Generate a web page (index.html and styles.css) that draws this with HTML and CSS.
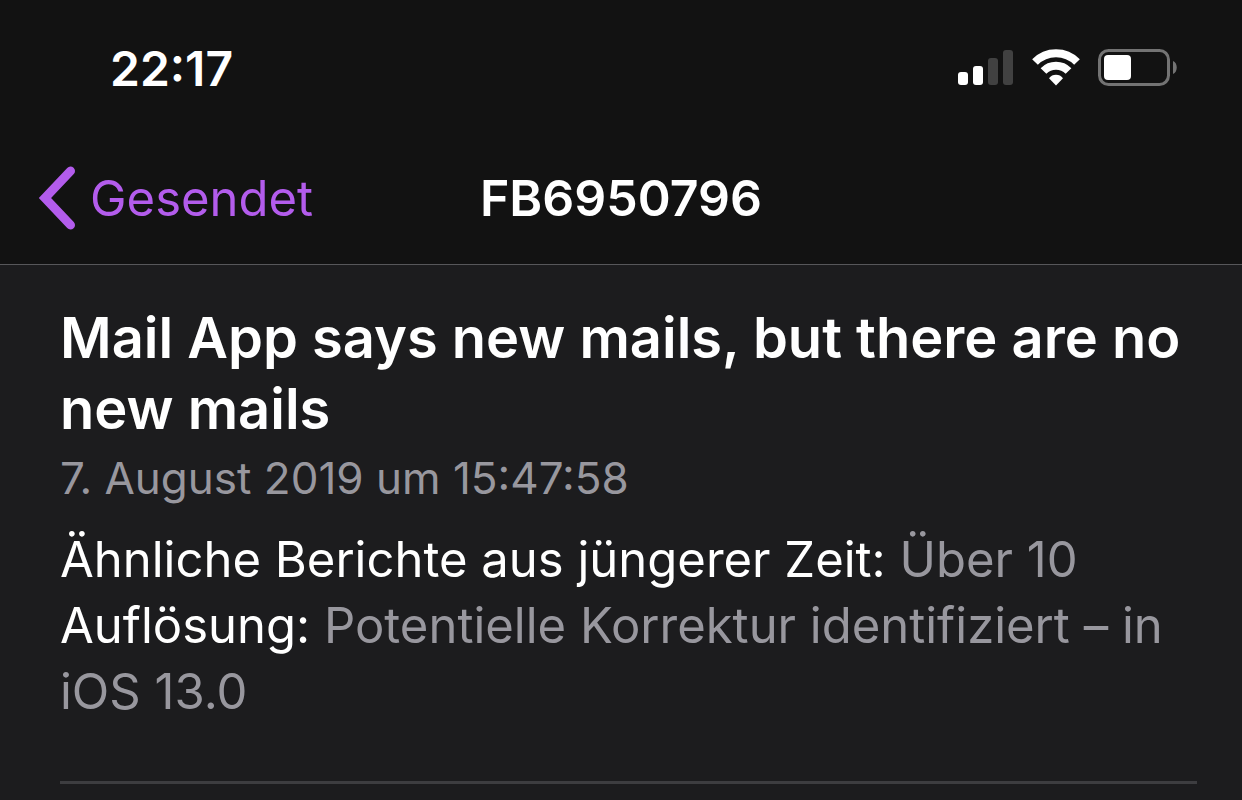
FILE: index.html
```
<!DOCTYPE html>
<html lang="de">
<head>
    <meta charset="UTF-8">
    <meta name="viewport" content="width=device-width, initial-scale=1.0">
    <title>FB6950796</title>
    <link rel="stylesheet" href="styles.css">
</head>
<body>
    <header class="top">
        <div class="status-bar">
            <time class="clock">22:17</time>
            <div class="status-icons">
                <svg class="signal" viewBox="0 0 56 36" aria-hidden="true">
                    <rect x="0" y="22" width="10" height="13" rx="3"/>
                    <rect x="15" y="16" width="10" height="19" rx="3"/>
                    <rect class="dim" x="30" y="8" width="10" height="27" rx="3"/>
                    <rect class="dim" x="45" y="0" width="10" height="35" rx="3"/>
                </svg>
                <svg class="wifi" viewBox="0 0 48 38" aria-hidden="true">
                    <path class="arc" d="M3 13a29.500 29.500 0 0 1 42 0"/>
                    <path class="arc" d="M11.500 22a17.500 17.500 0 0 1 25 0"/>
                    <path d="M24 36.500L17 29.200a9 9 0 0 1 14 0z"/>
                </svg>
                <svg class="battery" viewBox="0 0 80 38" aria-hidden="true">
                    <rect class="shell" x="1.500" y="1.500" width="69" height="34" rx="9"/>
                    <rect x="6" y="6" width="27" height="25" rx="4"/>
                    <path class="cap" d="M75 12c5 2 5 11 0 13z"/>
                </svg>
            </div>
        </div>
        <nav class="nav-bar">
            <a class="back" href="#">
                <svg class="chevron" viewBox="0 0 38 64" aria-hidden="true"><path d="M32.500 5L7 32l25.500 27"/></svg>
                Gesendet
            </a>
            <h1 class="title">FB6950796</h1>
        </nav>
    </header>

    <main class="report">
        <h2 class="subject">Mail App says new mails, but there are no new mails</h2>
        <time class="date">7. August 2019 um 15:47:58</time>
        <p class="details">
            Ähnliche Berichte aus jüngerer Zeit: <span class="value">Über 10</span><br>
            Auflösung: <span class="value">Potentielle Korrektur identifiziert – in iOS 13.0</span>
        </p>
        <hr class="divider">
    </main>
</body>
</html>
```
FILE: styles.css
```
body {
    margin: 0;
    background-color: #1c1c1e;
    color: #fff;
    font-family: Inter, "Liberation Sans", sans-serif;
}

.top {
    background-color: #121212;
    border-bottom: 1px solid #57575a;
}

.status-bar {
    display: flex;
    align-items: center;
    justify-content: space-between;
    height: 136px;
    padding: 0 64px 0 110px;
}

.clock {
    font-size: 48px;
    font-weight: 600;
}

.status-icons {
    display: flex;
    align-items: center;
    gap: 18px;
    fill: #fff;
}

.signal {
    width: 56px;
    height: 36px;
}

.dim {
    fill: #414141;
}

.wifi {
    width: 48px;
    height: 38px;
}

.arc {
    fill: none;
    stroke: #fff;
    stroke-width: 8;
}

.battery {
    width: 80px;
    height: 38px;
}

.shell {
    fill: none;
    stroke: #737373;
    stroke-width: 3;
}

.cap {
    fill: #737373;
}

/* Title stays centered whatever the back link's width */
.nav-bar {
    display: grid;
    grid-template-columns: 1fr auto 1fr;
    align-items: center;
    height: 124px;
    padding: 0 38px 4px;
}

.back {
    display: flex;
    align-items: center;
    gap: 14px;
    color: #b35cec;
    font-size: 49px;
    text-decoration: none;
}

.chevron {
    width: 38px;
    height: 64px;
    fill: none;
    stroke: #b35cec;
    stroke-width: 9;
    stroke-linecap: round;
    stroke-linejoin: miter;
}

.title {
    margin: 0;
    font-size: 50px;
    font-weight: 600;
}

.report {
    padding: 38px 45px 0 60px;
}

.subject {
    margin: 0;
    font-size: 56px;
    font-weight: 600;
    line-height: 71px;
}

.date {
    display: block;
    margin-top: 6px;
    color: #98979e;
    font-size: 44px;
    line-height: 54px;
}

.details {
    margin: 22px 0 0;
    font-size: 49px;
    line-height: 66px;
}

.value {
    color: #98979e;
}

.divider {
    height: 3px;
    margin: 56px 0 0;
    border: none;
    background-color: #3d3d40;
}
```
